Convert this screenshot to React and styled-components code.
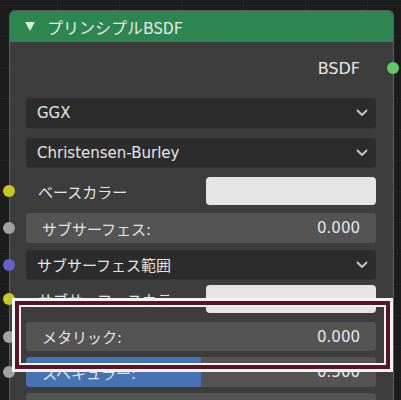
import React from 'react';
import styled, { createGlobalStyle } from 'styled-components';

const GlobalStyle = createGlobalStyle`
  html, body {
    margin: 0;
    padding: 0;
    background: #1d1d1d;
  }
  body {
    font-family: "DejaVu Sans", "Noto Sans CJK JP", sans-serif;
  }
`;

const Canvas = styled.div`
  position: relative;
  width: 401px;
  height: 400px;
  overflow: hidden;
  box-sizing: border-box;
  padding: 10px 0 0 9px;
  background-color: #1c1c1c;
  background-image: linear-gradient(to right, #262626 1px, transparent 1px),
    linear-gradient(to bottom, #262626 1px, transparent 1px);
  background-size: 62px 31px;
  background-position: -5px 5px;
`;

const Node = styled.div`
  width: 385px;
  height: 420px;
  box-sizing: border-box;
  background: #3d3d3d;
  border: 1px solid #5e5e5e;
  border-bottom: none;
  border-radius: 6px 6px 0 0;
`;

const Header = styled.div`
  height: 31px;
  display: flex;
  align-items: center;
  gap: 12px;
  padding-left: 15px;
  background: #2c8650;
  border-radius: 5px 5px 0 0;
  color: #ececec;
  font-size: 16px;
  font-family: "Noto Sans CJK JP", "DejaVu Sans", sans-serif;
`;

const Triangle = styled.span`
  width: 0;
  height: 0;
  border-left: 5px solid transparent;
  border-right: 5px solid transparent;
  border-top: 9px solid #d8e8dc;
`;

const Body = styled.div`
  padding: 0 17px 0 16px;
`;

const Output = styled.div`
  position: relative;
  height: 52px;
  display: flex;
  align-items: center;
  justify-content: flex-end;
  padding-right: 16px;
  color: #e8e8e8;
  font-size: 16px;
`;

const Row = styled.div`
  position: relative;
  height: ${({ h }) => h || 29}px;
  margin-top: ${({ mt }) => mt || 0}px;
  display: flex;
  align-items: center;
`;

const Socket = styled.span`
  position: absolute;
  top: 50%;
  width: 12px;
  height: 12px;
  margin-top: -6px;
  border-radius: 50%;
  background: ${({ color }) => color};
  ${({ side }) => (side === 'right' ? 'right: -23px;' : 'left: -23px;')}
`;

const Dropdown = styled.div`
  flex: 1;
  height: 100%;
  display: flex;
  align-items: center;
  justify-content: space-between;
  padding: 0 8px 0 11px;
  border-radius: 4px;
  background: #2c2c2c;
  box-shadow: 0 1px 0 #333;
  color: #e6e6e6;
  font-size: 15px;
`;

const Slider = styled.div`
  position: relative;
  flex: 1;
  height: 100%;
  display: flex;
  align-items: center;
  justify-content: space-between;
  padding: 0 16px 0 16px;
  border-radius: 4px;
  overflow: hidden;
  background: #545454;
  color: #e6e6e6;
  font-size: 15px;
`;

const Fill = styled.span`
  position: absolute;
  left: 0;
  top: 0;
  bottom: 0;
  background: #4772b3;
`;

const SliderText = styled.span`
  position: relative;
`;

const Label = styled.span`
  width: 180px;
  padding-left: 12px;
  box-sizing: border-box;
  color: #e6e6e6;
  font-size: 15px;
`;

const Swatch = styled.div`
  flex: 1;
  height: 100%;
  border-radius: 4px;
  background: #e5e5e5;
`;

const Highlight = styled.div`
  position: absolute;
  left: 12px;
  top: 298px;
  width: 381px;
  height: 74px;
  box-sizing: border-box;
  border: 3px solid #f4f4f4;
  box-shadow: inset 0 0 0 4px #5b1326, inset 0 0 0 6px #f4f4f4;
`;

const Chevron = () => (
  <svg width="12" height="8" viewBox="0 0 12 8">
    <polyline points="1.5,1.5 6,6 10.5,1.5" fill="none" stroke="#c8c8c8" strokeWidth="1.8" strokeLinecap="round" strokeLinejoin="round" />
  </svg>
);

const YELLOW = '#c7c729';
const GREY = '#a1a1a1';
const PURPLE = '#6363c7';

const App = () => (
  <>
    <GlobalStyle />
    <Canvas>
      <Node>
        <Header>
          <Triangle />
          プリンシプルBSDF
        </Header>
        <Body>
          <Output>
            BSDF
            <Socket side="right" color="#63c763" />
          </Output>
          <Row h={30} mt={4}>
            <Dropdown>
              GGX
              <Chevron />
            </Dropdown>
          </Row>
          <Row mt={10}>
            <Dropdown>
              Christensen-Burley
              <Chevron />
            </Dropdown>
          </Row>
          <Row h={28} mt={10}>
            <Socket color={YELLOW} />
            <Label>ベースカラー</Label>
            <Swatch />
          </Row>
          <Row h={30} mt={8}>
            <Socket color={GREY} />
            <Slider>
              <SliderText>サブサーフェス:</SliderText>
              <SliderText>0.000</SliderText>
            </Slider>
          </Row>
          <Row mt={7}>
            <Socket color={PURPLE} />
            <Dropdown>
              サブサーフェス範囲
              <Chevron />
            </Dropdown>
          </Row>
          <Row h={28} mt={6}>
            <Socket color={YELLOW} />
            <Label>サブサーフェスカラー</Label>
            <Swatch />
          </Row>
          <Row mt={9}>
            <Socket color={GREY} />
            <Slider>
              <SliderText>メタリック:</SliderText>
              <SliderText>0.000</SliderText>
            </Slider>
          </Row>
          <Row h={30} mt={6}>
            <Socket color={GREY} />
            <Slider>
              <Fill style={{ width: '50%' }} />
              <SliderText>スペキュラー:</SliderText>
              <SliderText>0.500</SliderText>
            </Slider>
          </Row>
          <Row h={30} mt={6}>
            <Socket color={GREY} />
            <Slider />
          </Row>
        </Body>
      </Node>
      <Highlight />
    </Canvas>
  </>
);

export default App;
